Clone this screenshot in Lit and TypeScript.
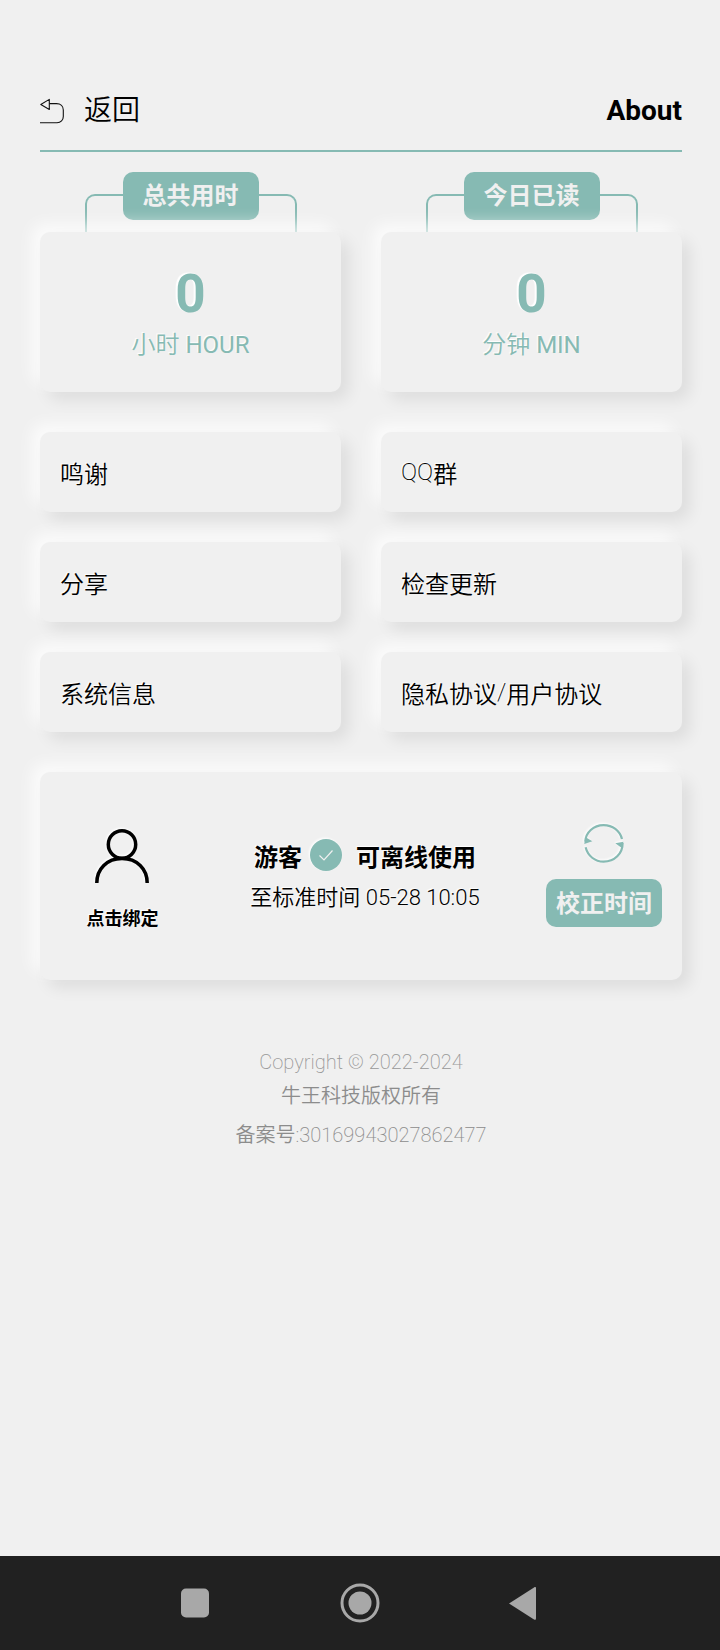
import { LitElement, html, css } from "lit";
import { customElement } from "lit/decorators.js";

@customElement("app-root")
export class AppRoot extends LitElement {
  static styles = css`
    :host {
      display: block;
      height: 1650px;
      background: #f0f0f0;
      font-family: Roboto, "Noto Sans CJK SC", sans-serif;
      font-weight: 400;
      color: #000;
    }
    .page { height: 1650px; display: flex; flex-direction: column; }
    main { flex: 1; padding: 90px 38px 0 40px; display: flex; flex-direction: column; }
    .thin { font-weight: 200; }
    header {
      height: 60px;
      display: flex;
      align-items: flex-start;
      justify-content: space-between;
      border-bottom: 2px solid #86bab3;
    }
    .back { display: flex; align-items: center; gap: 20px; font-size: 28px; line-height: 42px; font-weight: 350; }
    .back svg { display: block; }
    .about { font-size: 28px; line-height: 42px; font-weight: 700; }
    .grid { display: grid; grid-template-columns: 301px 301px; column-gap: 40px; }
    .stats { margin-top: 20px; }
    .stat { display: flex; flex-direction: column; align-items: center; padding-top: 22px; }
    .bracket {
      width: 212px;
      height: 38px;
      box-sizing: border-box;
      border: 2px solid #86bab3;
      border-bottom: 0;
      border-radius: 10px 10px 0 0;
      display: flex;
      justify-content: center;
    }
    .tag {
      width: 136px;
      height: 48px;
      flex: none;
      box-sizing: border-box;
      padding-bottom: 6px;
      margin-top: -24px;
      border-radius: 10px;
      background: #86bab3;
      color: #f0f0f0;
      font-size: 24px;
      font-weight: 700;
      display: flex;
      align-items: center;
      justify-content: center;
    }
    .card {
      background: #f0f0f0;
      border-radius: 10px;
      box-shadow: 8px 8px 16px rgba(0, 0, 0, 0.08), -8px -8px 16px rgba(255, 255, 255, 0.75);
    }
    .stat .card {
      align-self: stretch;
      height: 160px;
      display: flex;
      flex-direction: column;
      align-items: center;
      color: #86bab3;
      text-shadow: -1px -1px 1px #fff;
    }
    .num { margin-top: 30px; font-size: 53px; line-height: 64px; font-weight: 700; text-shadow: -2px -1px 1px #fff; }
    .unit { font-size: 24px; line-height: 36px; margin-top: 1px; font-weight: 350; }
    .unit b { font-weight: 400; }
    .links { margin-top: 40px; row-gap: 30px; }
    .link {
      height: 80px;
      padding-left: 20px;
      display: flex;
      align-items: center;
      font-size: 24px;
      font-weight: 350;
      text-shadow: -1px -1px 1px #fff;
    }
    .account {
      margin-top: 40px;
      height: 208px;
      display: flex;
      align-items: center;
      text-shadow: -1px -1px 1px #fff;
    }
    .bind { width: 165px; display: flex; flex-direction: column; align-items: center; margin-top: 7px; }
    .bind svg { display: block; margin-left: -2px; filter: drop-shadow(-1px -1px 1px #fff); }
    .bind span { margin-top: 21px; font-size: 18px; font-weight: 700; }
    .info { width: 288px; display: flex; flex-direction: column; align-items: center; margin-left: 16px; }
    .name { display: flex; align-items: center; font-size: 24px; font-weight: 700; height: 44px; margin-top: -3px; }
    .check { margin: 0 14px 0 8px; display: block; filter: drop-shadow(-1px -1px 1px #fff); }
    .clock { font-size: 22px; line-height: 36px; margin-top: 3px; white-space: nowrap; font-weight: 350; }
    .clock .thin { font-weight: 300; }
    .sync { width: 116px; margin: -1px 20px 0 auto; display: flex; flex-direction: column; align-items: center; }
    .sync svg { display: block; filter: drop-shadow(-1px -1px 1px #fff); }
    .fix {
      margin-top: 15px;
      width: 116px;
      height: 48px;
      box-sizing: border-box;
      padding-bottom: 4px;
      border-radius: 10px;
      background: #86bab3;
      color: #f0f0f0;
      font-size: 24px;
      font-weight: 700;
      text-shadow: none;
      display: flex;
      align-items: center;
      justify-content: center;
    }
    footer {
      margin-top: 65px;
      display: flex;
      flex-direction: column;
      align-items: center;
      color: #8c8c8c;
      font-size: 20px;
      font-weight: 350;
    }
    footer div { white-space: nowrap; }
    .l1 { line-height: 35px; color: #989898; }
    .l2 { line-height: 32px; }
    .l3 { line-height: 40px; margin-top: 3px; }
    nav {
      height: 94px;
      background: #212121;
      display: flex;
      align-items: center;
      justify-content: center;
    }
    nav svg { display: block; }
  `;

  render() {
    return html`
      <div class="page">
        <main>
          <header>
            <div class="back">
              <svg width="24" height="26" viewBox="0 0 24 26" fill="none" stroke="#111" stroke-width="1.1">
                <path d="M0.8 6.5 9.3 1.4V11.4Z" stroke-linejoin="round" />
                <path d="M9.3 5.6H16.5C20.6 5.6 23.3 8.2 23.3 12V18.4C23.3 22 20.8 24.8 17 24.8H0" />
              </svg>
              <span>返回</span>
            </div>
            <div class="about">About</div>
          </header>

          <section class="grid stats">
            <div class="stat">
              <div class="bracket"><div class="tag">总共用时</div></div>
              <div class="card">
                <div class="num">0</div>
                <div class="unit">小时 <b>HOUR</b></div>
              </div>
            </div>
            <div class="stat">
              <div class="bracket"><div class="tag">今日已读</div></div>
              <div class="card">
                <div class="num">0</div>
                <div class="unit">分钟 <b>MIN</b></div>
              </div>
            </div>
          </section>

          <section class="grid links">
            <div class="card link">鸣谢</div>
            <div class="card link"><span class="thin">QQ</span>群</div>
            <div class="card link">分享</div>
            <div class="card link">检查更新</div>
            <div class="card link">系统信息</div>
            <div class="card link">隐私协议<span class="thin">/</span>用户协议</div>
          </section>

          <section class="card account">
            <div class="bind">
              <svg width="54" height="54" viewBox="0 0 54 54" fill="none" stroke="#000" stroke-width="3.5">
                <circle cx="27" cy="15.5" r="13.7" />
                <path d="M1.8 54C1.8 40 12 29.6 27 29.6S52.2 40 52.2 54" />
              </svg>
              <span>点击绑定</span>
            </div>
            <div class="info">
              <div class="name">
                <span>游客</span>
                <svg class="check" width="32" height="32" viewBox="0 0 32 32">
                  <circle cx="16" cy="16" r="16" fill="#86bab3" />
                  <path d="M9.5 16.5 14 21 22.5 11.5" fill="none" stroke="#f0f0f0" stroke-width="1.2" />
                </svg>
                <span>可离线使用</span>
              </div>
              <div class="clock">至标准时间 <span class="thin">05-28 10:05</span></div>
            </div>
            <div class="sync">
              <svg width="42" height="40" viewBox="0 0 42 40" fill="none" stroke="#86bab3" stroke-width="2.2">
                <path d="M39 15C36.8 6.6 29.6 1.1 20.6 1.1C10.4 1.1 2.6 8.6 2.3 17.5" />
                <path d="M2.6 23.3C4.8 32 12 37.7 20.6 37.7C31.5 37.7 39.8 29.5 39.6 19" />
                <path d="M1.3 20 9.3 17.3 2.3 13Z" fill="#86bab3" stroke="none" />
                <path d="M40.4 17.7 32.3 19.3 39.2 24.3Z" fill="#86bab3" stroke="none" />
              </svg>
              <div class="fix">校正时间</div>
            </div>
          </section>

          <footer>
            <div class="l1 thin">Copyright © 2022-2024</div>
            <div class="l2">牛王科技版权所有</div>
            <div class="l3">备案号<span class="thin">:30169943027862477</span></div>
          </footer>
        </main>

        <nav>
          <svg width="380" height="40" viewBox="0 0 380 40">
            <rect x="11" y="5.5" width="28" height="29" rx="5" fill="#a8a8a8" />
            <circle cx="190" cy="20" r="18" fill="none" stroke="#a8a8a8" stroke-width="3" />
            <circle cx="190" cy="20" r="11.5" fill="#a8a8a8" />
            <path d="M339 20.5 364 4.5C365.5 3.6 366 4 366 5.5V35C366 36.8 365.5 37.2 364 36.4Z" fill="#a8a8a8" />
          </svg>
        </nav>
      </div>
    `;
  }
}
